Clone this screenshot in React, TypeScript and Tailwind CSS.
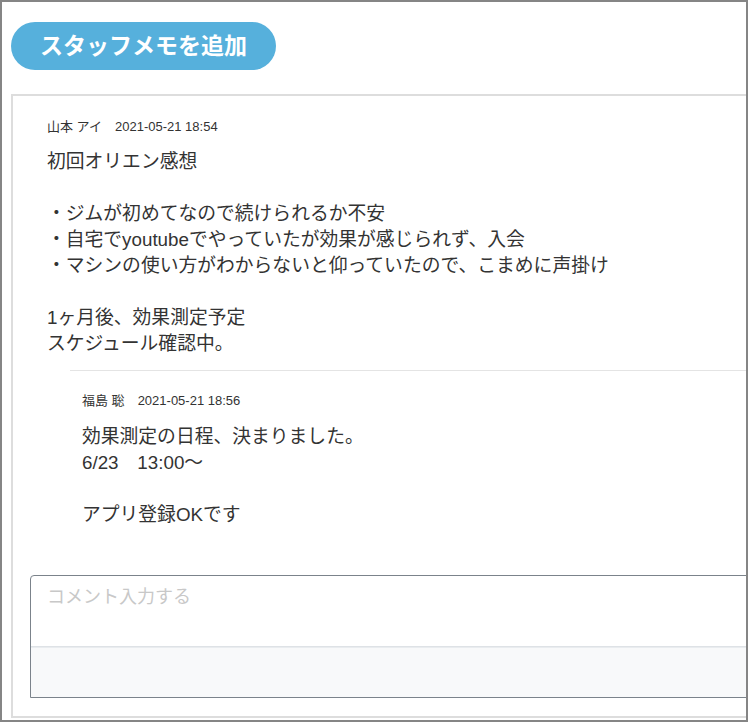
import React from 'react';

const font = { fontFamily: '"Liberation Sans", "Noto Sans CJK JP", sans-serif' };

type Memo = {
  author: string;
  postedAt: string;
  body: string;
};

const memo: Memo = {
  author: '山本 アイ',
  postedAt: '2021-05-21 18:54',
  body: '初回オリエン感想\n\n・ジムが初めてなので続けられるか不安\n・自宅でyoutubeでやっていたが効果が感じられず、入会\n・マシンの使い方がわからないと仰っていたので、こまめに声掛け\n\n1ヶ月後、効果測定予定\nスケジュール確認中。',
};

const reply: Memo = {
  author: '福島 聡',
  postedAt: '2021-05-21 18:56',
  body: '効果測定の日程、決まりました。\n6/23　13:00～\n\nアプリ登録OKです',
};

const MemoHeader: React.FC<{ memo: Memo }> = ({ memo }) => (
  <div className="text-[13px] leading-[18px] text-[#333]">
    {memo.author}　{memo.postedAt}
  </div>
);

const MemoBody: React.FC<{ text: string }> = ({ text }) => (
  <div className="whitespace-pre-wrap text-[18.8px] leading-[26px] text-[#333]">{text}</div>
);

const App: React.FC = () => {
  return (
    <div style={font} className="w-[748px] h-[722px] border-2 border-[#858585] bg-white overflow-hidden">
      <div className="pl-[9px] pt-[20px]">
        {/* Add memo button */}
        <button className="h-[48px] px-[29px] rounded-full bg-[#56b0dc] text-white text-[23px] font-bold leading-none whitespace-nowrap">
          スタッフメモを追加
        </button>

        {/* Memo panel */}
        <div className="mt-[24px] w-[780px] border-2 border-[#dddddd] pt-[22px] pl-[17px] pb-[18px]">
          <div className="pl-[17px]">
            <MemoHeader memo={memo} />
            <div className="mt-[13px]">
              <MemoBody text={memo.body} />
            </div>

            {/* Reply */}
            <div className="mt-[13px] ml-[23px] border-t border-[#e4e4e4] pt-[21px] pl-[12px]">
              <MemoHeader memo={reply} />
              <div className="mt-[14px]">
                <MemoBody text={reply.body} />
              </div>
            </div>
          </div>

          {/* Comment box */}
          <div className="mt-[47px] border border-[#7b838b] rounded-tl-[4px]">
            <textarea
              placeholder="コメント入力する"
              className="block w-full h-[71px] resize-none border-b border-[#dee2e6] rounded-tl-[4px] pl-[16px] pt-[8px] text-[18px] leading-[26px] text-[#333] placeholder:text-[#c8c8c8] outline-none"
              style={font}
            />
            <div className="h-[50px] border-t border-[#e9ecef] bg-[#f8f9fa]" />
          </div>
        </div>
      </div>
    </div>
  );
};

export default App;
